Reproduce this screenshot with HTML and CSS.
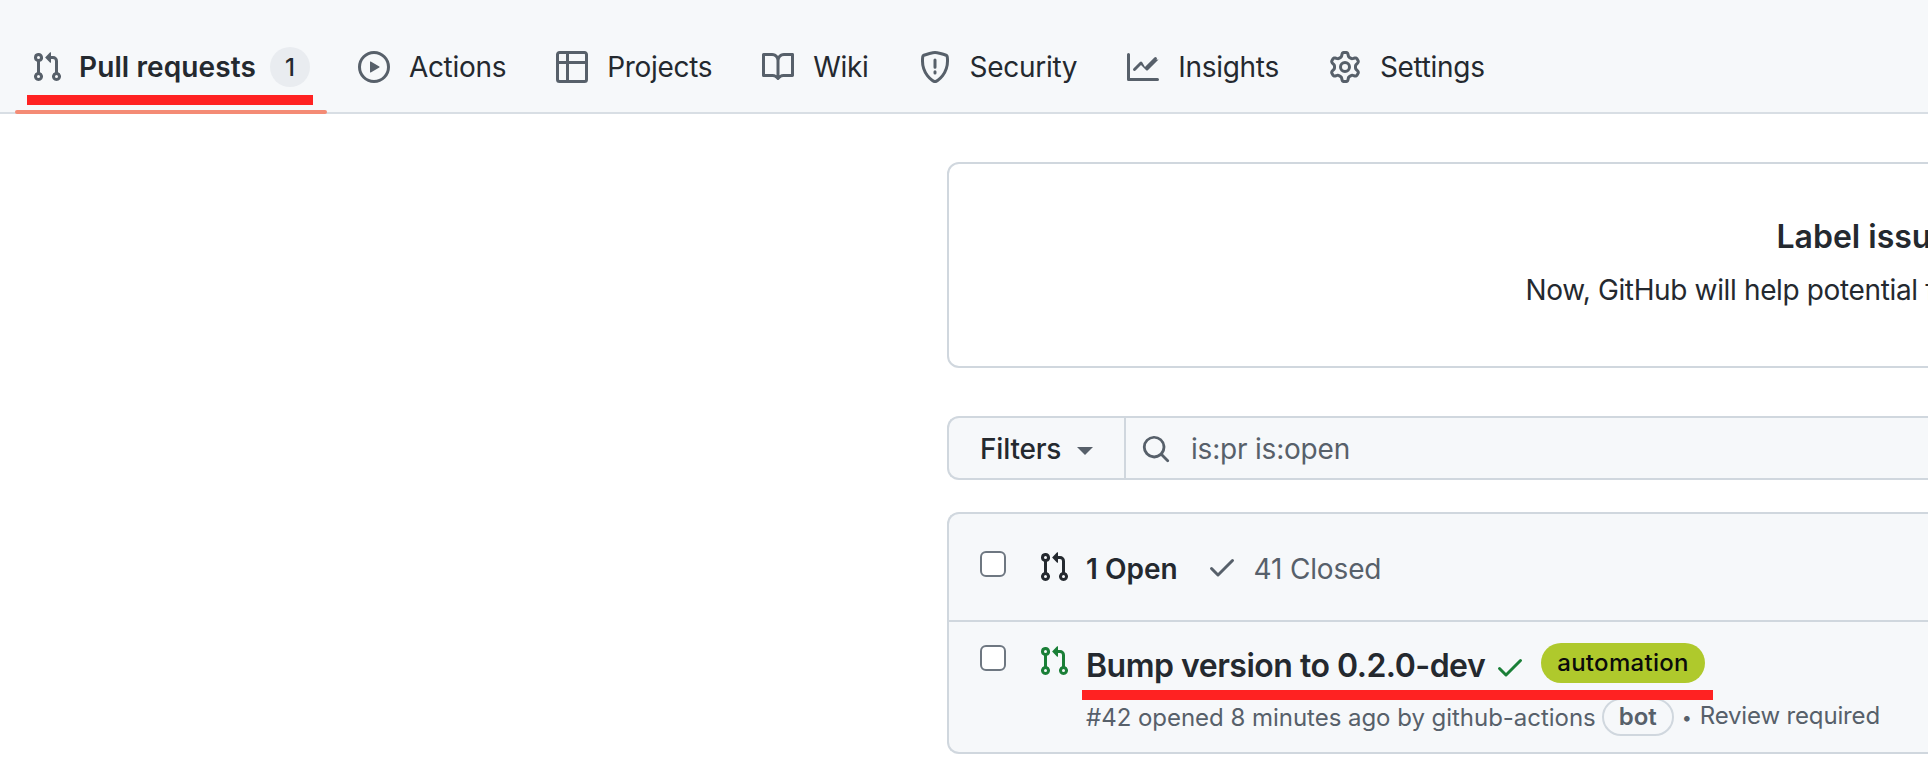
FILE: index.html
```html
<!DOCTYPE html>
<html lang="en">
<head>
<meta charset="utf-8">
<title>Pull requests</title>
<link rel="stylesheet" href="styles.css">
</head>
<body>
<svg class="defs" aria-hidden="true">
  <symbol id="i-pr" viewBox="0 0 16 16"><path d="M1.5 3.25a2.25 2.25 0 1 1 3 2.122v5.256a2.251 2.251 0 1 1-1.5 0V5.372A2.25 2.25 0 0 1 1.5 3.25Zm5.677-.177L9.573.677A.25.25 0 0 1 10 .854V2.5h1A2.5 2.5 0 0 1 13.5 5v5.628a2.251 2.251 0 1 1-1.5 0V5a1 1 0 0 0-1-1h-1v1.646a.25.25 0 0 1-.427.177L7.177 3.427a.25.25 0 0 1 0-.354ZM3.75 2.5a.75.75 0 1 0 0 1.5.75.75 0 0 0 0-1.5Zm0 9.5a.75.75 0 1 0 0 1.5.75.75 0 0 0 0-1.5Zm8.25.75a.75.75 0 1 0 1.5 0 .75.75 0 0 0-1.5 0Z"/></symbol>
  <symbol id="i-check" viewBox="0 0 16 16"><path d="M13.78 4.22a.75.75 0 0 1 0 1.06l-7.25 7.25a.75.75 0 0 1-1.06 0L2.22 9.28a.751.751 0 0 1 .018-1.042.751.751 0 0 1 1.042-.018L6 10.94l6.72-6.72a.75.75 0 0 1 1.06 0Z"/></symbol>
</svg>
<div class="page">
  <nav class="nav">
    <a class="tab tab-active">
      <svg class="icon"><use href="#i-pr"/></svg>
      <span class="tab-label-strong">Pull requests</span>
      <span class="counter">1</span>
    </a>
    <a class="tab">
      <svg class="icon" viewBox="0 0 16 16"><path d="M8 0a8 8 0 1 1 0 16A8 8 0 0 1 8 0ZM1.5 8a6.5 6.5 0 1 0 13 0 6.5 6.5 0 0 0-13 0Zm4.879-2.773 4.264 2.559a.25.25 0 0 1 0 .428l-4.264 2.559A.25.25 0 0 1 6 10.559V5.442a.25.25 0 0 1 .379-.215Z"/></svg>
      <span>Actions</span>
    </a>
    <a class="tab">
      <svg class="icon" viewBox="0 0 16 16"><path d="M0 1.75C0 .784.784 0 1.75 0h12.5C15.216 0 16 .784 16 1.75v12.5A1.75 1.75 0 0 1 14.25 16H1.75A1.75 1.75 0 0 1 0 14.25ZM6.5 6.5v8h7.75a.25.25 0 0 0 .25-.25V6.5Zm8-1.5V1.75a.25.25 0 0 0-.25-.25H6.5V5Zm-13 1.5v7.75c0 .138.112.25.25.25H5v-8ZM5 5V1.5H1.75a.25.25 0 0 0-.25.25V5Z"/></svg>
      <span>Projects</span>
    </a>
    <a class="tab">
      <svg class="icon" viewBox="0 0 16 16"><path d="M0 1.75A.75.75 0 0 1 .75 1h4.253c1.227 0 2.317.59 3 1.501A3.743 3.743 0 0 1 11.006 1h4.245a.75.75 0 0 1 .75.75v10.5a.75.75 0 0 1-.75.75h-4.507a2.25 2.25 0 0 0-1.591.659l-.622.621a.75.75 0 0 1-1.06 0l-.622-.621A2.25 2.25 0 0 0 5.258 13H.75a.75.75 0 0 1-.75-.75Zm7.251 10.324.004-5.073-.002-2.253A2.25 2.25 0 0 0 5.003 2.5H1.5v9h3.757a3.75 3.75 0 0 1 1.994.574ZM8.755 4.75l-.004 7.322a3.752 3.752 0 0 1 1.992-.572H14.5v-9h-3.495a2.25 2.25 0 0 0-2.25 2.25Z"/></svg>
      <span>Wiki</span>
    </a>
    <a class="tab">
      <svg class="icon icon-shield" viewBox="0 0 16 16"><path d="M8 .75c-.6 0-1.7.25-2.73.53-1.08.3-2.2.64-2.85.86a.8.8 0 0 0-.54.65C1.3 7.1 2.6 10.2 4.2 12.3a11 11 0 0 0 2.36 2.3c.35.25.68.44.95.57.2.1.38.13.49.13s.29-.03.49-.13c.27-.13.6-.32.95-.57a11 11 0 0 0 2.36-2.3c1.6-2.1 2.9-5.2 2.32-9.51a.8.8 0 0 0-.54-.65 61 61 0 0 0-2.85-.86C9.7 1 8.6.75 8 .75Z"/><path d="M8 4.5v3.6M8 10.4v.6"/></svg>
      <span>Security</span>
    </a>
    <a class="tab">
      <svg class="icon" viewBox="0 0 16 16"><path d="M1.5 1.75V13.5h13.75a.75.75 0 0 1 0 1.5H.75a.75.75 0 0 1-.75-.75V1.75a.75.75 0 0 1 1.5 0Zm14.28 2.53-5.25 5.25a.75.75 0 0 1-1.06 0L7 7.06 4.28 9.78a.751.751 0 0 1-1.042-.018.751.751 0 0 1-.018-1.042l3.25-3.25a.75.75 0 0 1 1.06 0L8.98 8.01l4.72-4.72a.751.751 0 0 1 1.042.018.751.751 0 0 1 .018 1.042Z"/></svg>
      <span>Insights</span>
    </a>
    <a class="tab">
      <svg class="icon" viewBox="0 0 16 16"><path d="M8 0a8.2 8.2 0 0 1 .701.031C9.444.095 9.99.645 10.16 1.29l.288 1.107c.018.066.079.158.212.224.231.114.454.243.668.386.123.082.233.09.299.071l1.103-.303c.644-.176 1.392.021 1.82.63.27.385.506.792.704 1.218.315.675.111 1.422-.364 1.891l-.814.806c-.049.048-.098.147-.088.294.016.257.016.515 0 .772-.01.147.038.246.088.294l.814.806c.475.469.679 1.216.364 1.891a7.977 7.977 0 0 1-.704 1.217c-.428.61-1.176.807-1.82.63l-1.102-.302c-.067-.019-.177-.011-.3.071a5.909 5.909 0 0 1-.668.386c-.133.066-.194.158-.211.224l-.29 1.106c-.168.646-.715 1.196-1.458 1.26a8.006 8.006 0 0 1-1.402 0c-.743-.064-1.289-.614-1.458-1.26l-.289-1.106c-.018-.066-.079-.158-.212-.224a5.738 5.738 0 0 1-.668-.386c-.123-.082-.233-.09-.299-.071l-1.103.303c-.644.176-1.392-.021-1.82-.63a8.12 8.12 0 0 1-.704-1.218c-.315-.675-.111-1.422.363-1.891l.815-.806c.05-.048.098-.147.088-.294a6.214 6.214 0 0 1 0-.772c.01-.147-.038-.246-.088-.294l-.815-.806C.635 6.045.431 5.298.746 4.623a7.92 7.92 0 0 1 .704-1.217c.428-.61 1.176-.807 1.82-.63l1.102.302c.067.019.177.011.3-.071.214-.143.437-.272.668-.386.133-.066.194-.158.211-.224l.29-1.106C6.009.645 6.556.095 7.299.03 7.53.01 7.764 0 8 0Zm-.571 1.525c-.036.003-.108.036-.137.146l-.289 1.105c-.147.561-.549.967-.998 1.189-.173.086-.34.183-.5.29-.417.278-.97.423-1.529.27l-1.103-.303c-.109-.03-.175.016-.195.045-.22.312-.412.644-.573.99-.014.031-.021.11.059.19l.815.806c.411.406.562.957.53 1.456a4.709 4.709 0 0 0 0 .582c.032.499-.119 1.05-.53 1.456l-.815.806c-.081.08-.073.159-.059.19.162.346.353.677.573.989.02.03.085.076.195.046l1.102-.303c.56-.153 1.113-.008 1.53.27.161.107.328.204.501.29.447.222.85.629.997 1.189l.289 1.105c.029.109.101.143.137.146a6.6 6.6 0 0 0 1.142 0c.036-.003.108-.036.137-.146l.289-1.105c.147-.561.549-.967.998-1.189.173-.086.34-.183.5-.29.417-.278.97-.423 1.529-.27l1.103.303c.109.029.175-.016.195-.045.22-.313.411-.644.573-.99.014-.031.021-.11-.059-.19l-.815-.806c-.411-.406-.562-.957-.53-1.456a4.709 4.709 0 0 0 0-.582c-.032-.499.119-1.05.53-1.456l.815-.806c.081-.08.073-.159.059-.19a6.464 6.464 0 0 0-.573-.989c-.02-.03-.085-.076-.195-.046l-1.102.303c-.56.153-1.113.008-1.53-.27a4.44 4.44 0 0 0-.501-.29c-.447-.222-.85-.629-.997-1.189l-.289-1.105c-.029-.11-.101-.143-.137-.146a6.6 6.6 0 0 0-1.142 0ZM11 8a3 3 0 1 1-6 0 3 3 0 0 1 6 0ZM9.5 8a1.5 1.5 0 1 0-3 0 1.5 1.5 0 0 0 3 0Z"/></svg>
      <span>Settings</span>
    </a>
  </nav>

  <main class="main">
    <section class="notice">
      <h2 class="notice-title">Label issues and pull requests for new contributors</h2>
      <p class="notice-text">Now, GitHub will help potential first-time contributors discover issues labeled with good first issue</p>
    </section>

    <div class="filterbar">
      <div class="filter-btn">Filters<span class="caret"></span></div>
      <div class="filter-input">
        <svg class="search-icon" viewBox="0 0 16 16"><path d="M10.68 11.74a6 6 0 0 1-7.922-8.982 6 6 0 0 1 8.982 7.922l3.04 3.04a.749.749 0 0 1-.326 1.275.749.749 0 0 1-.734-.215ZM11.5 7a4.499 4.499 0 1 0-8.997 0A4.499 4.499 0 0 0 11.5 7Z"/></svg>
        <span>is:pr is:open</span>
      </div>
    </div>

    <section class="list">
      <div class="list-head">
        <span class="checkbox"></span>
        <svg class="icon icon-dark"><use href="#i-pr"/></svg>
        <span class="open-count">1 Open</span>
        <svg class="icon icon-closed"><use href="#i-check"/></svg>
        <span class="closed-count">41 Closed</span>
      </div>
      <div class="list-row">
        <span class="checkbox"></span>
        <svg class="icon icon-green"><use href="#i-pr"/></svg>
        <div class="row-main">
          <div class="row-title">
            <span class="title-text">Bump version to 0.2.0-dev</span>
            <svg class="icon icon-green-check"><use href="#i-check"/></svg>
            <span class="label">automation</span>
          </div>
          <div class="row-meta">
            <span>#42 opened 8 minutes ago by github-actions</span>
            <span class="bot">bot</span>
            <span class="review"><span class="dot">•</span>Review required</span>
          </div>
        </div>
      </div>
    </section>
  </main>

  <div class="mark mark-tab"></div>
  <div class="mark mark-title"></div>
</div>
</body>
</html>
```
FILE: styles.css
```css
* { box-sizing: border-box; }
html, body { margin: 0; padding: 0; height: 762px; overflow: hidden; background: #fff; }
body { font-family: Inter, "Liberation Sans", sans-serif; color: #24292f; }
.defs { position: absolute; width: 0; height: 0; }
.page { position: relative; width: 1928px; height: 762px; overflow: hidden; }

.nav { display: flex; align-items: stretch; height: 114px; padding-left: 15px; background: #f6f8fa; border-bottom: 2px solid #d8dee4; gap: 18px; font-size: 28px; }
.tab { position: relative; display: flex; align-items: center; padding: 22px 16px 0; gap: 19px; white-space: nowrap; letter-spacing: -0.3px; }
.tab-active { gap: 16px; padding-right: 17px; margin-right: -3px; letter-spacing: 0.1px; }
.tab-active::after { content: ""; position: absolute; left: 0; right: 0; bottom: -2px; height: 4px; border-radius: 2px; background: #f48b75; }
.tab-label-strong { font-weight: 600; }
.counter { display: flex; align-items: center; justify-content: center; width: 40px; height: 40px; border-radius: 20px; background: #e9ecf0; font-size: 24px; font-weight: 500; margin-left: -2px; letter-spacing: 0; }
.icon { width: 32px; height: 32px; flex: none; fill: #57606a; }
.icon-shield { fill: none; stroke: #57606a; stroke-width: 1.5; stroke-linecap: round; }

.main { padding: 48px 0 0 947px; }
.notice { width: 2414px; height: 206px; border: 2px solid #d0d7de; border-radius: 12px; background: #fff; text-align: center; padding-top: 53px; }
.notice-title { margin: 0; padding-left: 34px; font-size: 32px; line-height: 40px; font-weight: 600; }
.notice-text { margin: 14px 0 0; font-size: 28px; line-height: 38px; letter-spacing: -0.36px; }

.filterbar { display: flex; width: 1500px; height: 64px; margin-top: 48px; border: 2px solid #d0d7de; border-radius: 12px 0 0 12px; border-right: 0; background: #f6f8fa; font-size: 28px; }
.filter-btn { display: flex; align-items: center; width: 177px; padding: 2px 0 0 31px; border-right: 2px solid #d0d7de; letter-spacing: -0.2px; font-weight: 500; }
.caret { margin-left: 16px; margin-top: 4px; border-style: solid; border-width: 8px 8px 0; border-color: #57606a transparent transparent; }
.filter-input { display: flex; align-items: center; padding: 2px 0 0 15px; gap: 20px; color: #57606a; letter-spacing: -0.2px; }
.search-icon { width: 30px; height: 30px; fill: #57606a; }

.list { width: 1500px; height: 242px; margin-top: 32px; border: 2px solid #d0d7de; border-right: 0; border-radius: 12px 0 0 12px; background: #f6f8fa; }
.list-head { display: flex; align-items: flex-start; height: 108px; padding: 37px 0 0 31px; border-bottom: 2px solid #d0d7de; font-size: 28px; }
.list-row { display: flex; align-items: flex-start; padding: 23px 0 0 31px; }
.checkbox { flex: none; width: 26px; height: 26px; margin-right: 32px; border: 2px solid #6e7781; border-radius: 6px; background: #fff; }
.icon-dark { fill: #24292f; }
.icon-green { fill: #1a7f37; }
.open-count { margin-left: 16px; font-weight: 600; line-height: 36px; letter-spacing: 0; }
.icon-closed { margin-left: 28px; }
.closed-count { margin-left: 16px; color: #57606a; line-height: 36px; letter-spacing: -0.15px; }

.row-main { margin-left: 16px; }
.row-title { display: flex; align-items: center; height: 40px; }
.title-text { font-size: 32px; font-weight: 600; letter-spacing: -0.5px; }
.icon-green-check { margin-left: 9px; fill: #1a7f37; margin-top: 4px; }
.label { margin-left: 15px; margin-top: -4px; padding: 0 16px; height: 40px; line-height: 39px; border-radius: 20px; background: #afc92c; color: #0b0b0b; font-size: 24px; font-weight: 500; letter-spacing: 0.3px; }
.row-meta { display: flex; align-items: center; margin-top: 13px; font-size: 24px; color: #57606a; white-space: nowrap; letter-spacing: -0.03px; }
.bot { margin-left: 6px; padding: 0 15px; height: 38px; line-height: 34px; border: 2px solid #d0d7de; border-radius: 19px; font-weight: 600; }
.review { margin-left: 8px; margin-top: -4px; letter-spacing: -0.15px; }
.dot { margin-right: 8px; font-size: 18px; }

.mark { position: absolute; background: #ff2222; height: 10px; }
.mark-tab { left: 27px; top: 95px; width: 286px; }
.mark-title { left: 1082px; top: 690px; width: 631px; }
```
